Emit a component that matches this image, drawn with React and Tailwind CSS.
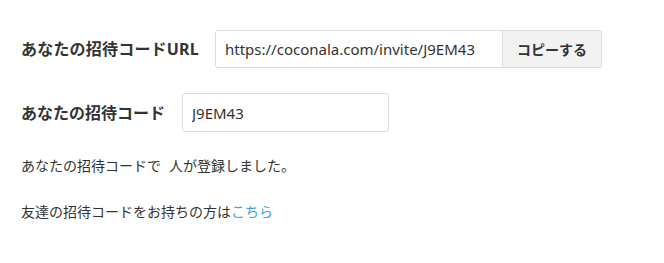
export default function App() {
  const font = { fontFamily: '"Noto Sans", "Noto Sans CJK JP", sans-serif' };
  return (
    <div className="min-h-screen bg-white text-[#333] pl-[21px] pt-[30px]" style={font}>
      <div className="flex items-center h-[38px]">
        <div className="text-[16px] font-bold leading-none w-[194px] tracking-[0.2px]">あなたの招待コードURL</div>
        <div className="flex h-[38px]">
          <input
            readOnly
            value="https://coconala.com/invite/J9EM43"
            className="w-[288px] h-[38px] border border-[#dcdcdc] rounded-l-[3px] px-[9px] text-[15px] text-[#333] outline-none"
          />
          <button className="w-[99px] h-[38px] border border-l-0 border-[#dcdcdc] bg-[#f2f2f2] rounded-r-[3px] text-[14px] font-semibold text-[#333]">
            コピーする
          </button>
        </div>
      </div>
      <div className="flex items-center h-[39px] mt-[25px]">
        <div className="text-[16px] font-bold leading-none w-[161px]">あなたの招待コード</div>
        <input
          readOnly
          value="J9EM43"
          className="w-[207px] h-[39px] border border-[#dcdcdc] rounded-[3px] px-[9px] text-[15px] text-[#333] outline-none"
        />
      </div>
      <p className="mt-[24px] text-[14px] leading-[20px]">
        あなたの招待コードで<span className="inline-block w-[8px]"></span>人が登録しました。
      </p>
      <p className="mt-[26px] text-[14px] leading-[20px]">
        友達の招待コードをお持ちの方は<a href="#" className="text-[#3aa3e3]">こちら</a>
      </p>
    </div>
  );
}
